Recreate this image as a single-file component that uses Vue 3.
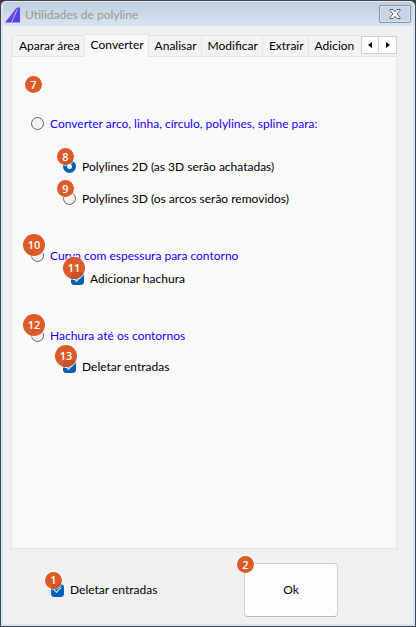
<script setup>
import { ref } from 'vue'

const tabs = ['Aparar área', 'Converter', 'Analisar', 'Modificar', 'Extrair', 'Adicion']
const activeTab = ref('Converter')

const mode = ref('')
const polyType = ref('2d')
const addHatch = ref(true)
const deleteHatchInput = ref(true)
const deleteInput = ref(true)

function shiftTab(step) {
  const next = tabs.indexOf(activeTab.value) + step
  if (tabs[next]) activeTab.value = tabs[next]
}
</script>

<template>
  <div class="window">
    <header class="titlebar">
      <svg class="logo" width="16" height="16" viewBox="0 0 16 16" aria-hidden="true">
        <path d="M0 15.500 11 1.500 12.500.5H15v15z" fill="#5a3fee" />
        <path d="M6.500 15.500 12.500 2" stroke="#cfd0f2" stroke-width="0.800" fill="none" />
        <path d="M4.500 12 11 4" stroke="#8f80ee" stroke-width="0.600" fill="none" />
      </svg>
      <h1 class="title">Utilidades de polyline</h1>
      <button class="close" type="button" aria-label="Fechar">
        <svg width="12" height="10" viewBox="0 0 12 10">
          <path
            d="M1 .5h3L6 2.700 8 .5h3v1L8 5l3 3.500v1H8L6 7.300 4 9.500H1v-1L4 5 1 1.500z"
            fill="#fff"
            stroke="#565c6c"
          />
        </svg>
      </button>
    </header>

    <main class="client">
      <div class="tabbar">
        <div class="tabs" role="tablist">
          <button
            v-for="tab in tabs"
            :key="tab"
            class="tab"
            :class="{ 'tab--active': tab === activeTab }"
            type="button"
            role="tab"
            :aria-selected="tab === activeTab"
            @click="activeTab = tab"
          >
            {{ tab }}
          </button>
        </div>
        <div class="scroller">
          <button class="arrow" type="button" aria-label="Anterior" @click="shiftTab(-1)">
            <svg width="4" height="6" viewBox="0 0 4 6"><path d="M4 0v6L0 3z" /></svg>
          </button>
          <button class="arrow" type="button" aria-label="Próxima" @click="shiftTab(1)">
            <svg width="4" height="6" viewBox="0 0 4 6"><path d="M0 0v6l4-3z" /></svg>
          </button>
        </div>
      </div>

      <section class="panel" role="tabpanel">
        <div class="marker"><span class="badge">7</span></div>

        <!-- Convert -->
        <div class="group">
          <label class="option option--main">
            <span class="control"><input v-model="mode" type="radio" name="mode" value="convert" /></span>
            Converter arco, linha, círculo, polylines, spline para:
          </label>
          <div class="choices">
            <label class="option">
              <span class="control">
                <input v-model="polyType" type="radio" name="poly" value="2d" />
                <span class="badge badge--pin">8</span>
              </span>
              Polylines 2D (as 3D serão achatadas)
            </label>
            <label class="option">
              <span class="control">
                <input v-model="polyType" type="radio" name="poly" value="3d" />
                <span class="badge badge--pin">9</span>
              </span>
              Polylines 3D (os arcos serão removidos)
            </label>
          </div>
        </div>

        <!-- Outline -->
        <div class="group">
          <label class="option option--main">
            <span class="control">
              <input v-model="mode" type="radio" name="mode" value="outline" />
              <span class="badge badge--pin badge--wide">10</span>
            </span>
            Curva com espessura para contorno
          </label>
          <label class="option option--deep">
            <span class="control">
              <input v-model="addHatch" type="checkbox" />
              <span class="badge badge--pin badge--wide">11</span>
            </span>
            Adicionar hachura
          </label>
        </div>

        <!-- Hatch -->
        <div class="group">
          <label class="option option--main">
            <span class="control">
              <input v-model="mode" type="radio" name="mode" value="hatch" />
              <span class="badge badge--pin badge--wide">12</span>
            </span>
            Hachura até os contornos
          </label>
          <div class="choices choices--near">
            <label class="option">
              <span class="control">
                <input v-model="deleteHatchInput" type="checkbox" />
                <span class="badge badge--pin badge--wide">13</span>
              </span>
              Deletar entradas
            </label>
          </div>
        </div>
      </section>

      <footer class="footer">
        <label class="option">
          <span class="control">
            <input v-model="deleteInput" type="checkbox" />
            <span class="badge badge--pin">1</span>
          </span>
          Deletar entradas
        </label>
        <button class="ok" type="button">
          Ok
          <span class="badge badge--corner">2</span>
        </button>
      </footer>
    </main>
  </div>
</template>

<style>
body {
  margin: 0;
  background: #3c3a42;
}
</style>

<style scoped>
*,
*::before,
*::after {
  box-sizing: border-box;
}

.window {
  min-height: 100vh;
  display: flex;
  flex-direction: column;
  border: 1px solid #45434a;
  border-radius: 6px 6px 0 0;
  background: #d9e4f1;
  padding: 0 2px 2px;
  font-family: 'Segoe UI', Lato, 'Noto Sans', sans-serif;
  font-size: 12px;
  line-height: 16px;
  color: #000;
}

button {
  font: inherit;
  color: inherit;
  padding: 0;
  margin: 0;
}

/* Title bar */
.titlebar {
  height: 25px;
  display: flex;
  align-items: center;
  gap: 4px;
  padding: 0 2px;
  border-top: 1px solid #e4ebf3;
  border-radius: 5px 5px 0 0;
  background: linear-gradient(#c0cddc, #d9e5f2);
}
.logo {
  margin-top: 2px;
}
.title {
  flex: 1;
  margin: 2px 0 0;
  font-size: 12px;
  font-weight: 400;
  color: #999;
}
.close {
  width: 32px;
  height: 18px;
  display: flex;
  align-items: center;
  justify-content: center;
  border: 1px solid #8793ab;
  border-radius: 2px;
  background: #c8d4e3;
  box-shadow: inset 0 0 0 1px #dbe4ef;
}

/* Tabs */
.client {
  flex: 1;
  display: flex;
  flex-direction: column;
  background: #f0f0f0;
  padding: 8px 16px 0 8px;
}
.tabbar {
  display: flex;
  align-items: flex-end;
  height: 22px;
}
.tabs {
  flex: 1;
  min-width: 0;
  display: flex;
  align-items: flex-end;
  overflow: hidden;
  padding-left: 1px;
  height: 23px;
  margin-bottom: -1px;
  position: relative;
}
.tab {
  flex: none;
  height: 21px;
  margin-bottom: 1px;
  padding: 0 4px 0 6px;
  border: 1px solid #e5e5e5;
  border-left-width: 0;
  border-bottom: 0;
  background: #f3f3f3;
  text-align: left;
}
.tab:first-child {
  border-left-width: 1px;
}
.tab:last-child {
  flex: 1;
  border-right: 0;
  padding-right: 0;
}
.tab--active {
  height: 23px;
  margin-bottom: 0;
  padding-bottom: 2px;
  background: #f9f9f9;
}
.scroller {
  display: flex;
  align-self: flex-start;
  height: 18px;
  margin-top: 2px;
}
.arrow {
  width: 18px;
  display: flex;
  align-items: center;
  justify-content: center;
  border: 1px solid #d0d0d0;
  background: #fdfdfd;
}
.arrow + .arrow {
  border-left-width: 0;
}

/* Panel */
.panel {
  flex: 1;
  border: 1px solid #e5e5e5;
  background: #f9f9f9;
  padding: 16px 12px 24px 19px;
}
.marker {
  height: 23px;
  display: flex;
  align-items: center;
  margin: 0 0 16px -6px;
}
.group {
  margin-bottom: 34px;
}
.choices {
  display: flex;
  flex-direction: column;
  gap: 9px;
  margin: 20px 0 0 32px;
}
.choices--near {
  margin-top: 8px;
}
.option {
  display: flex;
  align-items: center;
  gap: 6px;
  height: 23px;
  white-space: nowrap;
}
.option--main {
  color: #1400ff;
}
.option--deep {
  margin-left: 40px;
}

/* Controls */
.control {
  position: relative;
  display: flex;
}
input {
  appearance: none;
  width: 13px;
  height: 13px;
  margin: 0;
  border: 1px solid #626262;
  background: #f3f3f3;
}
input[type='radio'] {
  border-radius: 50%;
}
input[type='radio']:checked {
  border: 4px solid #005fb8;
  background: #fff;
}
input[type='checkbox'] {
  border-radius: 3px;
}
input[type='checkbox']:checked {
  display: grid;
  place-items: center;
  border-color: #005fb8;
  background: #005fb8;
}
input[type='checkbox']:checked::before {
  content: '';
  width: 7px;
  height: 4px;
  margin-bottom: 2px;
  border: solid #dbe8f5;
  border-width: 0 0 1px 1px;
  transform: rotate(-45deg);
}

/* Number badges */
.badge {
  width: 17px;
  height: 17px;
  display: flex;
  align-items: center;
  justify-content: center;
  border-radius: 50%;
  background: rgba(218, 79, 24, 0.93);
  box-shadow: 0 0 0 1px rgba(255, 255, 255, 0.7);
  color: #fff;
  font-family: 'Open Sans', sans-serif;
  font-size: 11px;
  font-weight: 600;
  line-height: 16px;
}
.badge--pin {
  position: absolute;
  left: -6px;
  top: -12px;
}
.badge--wide {
  width: 22px;
  height: 22px;
  left: -8px;
  top: -15px;
}
.badge--corner {
  position: absolute;
  left: -8px;
  top: -8px;
}

/* Footer */
.footer {
  display: flex;
  align-items: center;
  justify-content: space-between;
  padding: 14px 59px 7px 40px;
}
.ok {
  position: relative;
  width: 94px;
  height: 54px;
  border: 1px solid #d0d0d0;
  border-bottom-color: #bababa;
  border-radius: 4px;
  background: #fdfdfd;
}
</style>
